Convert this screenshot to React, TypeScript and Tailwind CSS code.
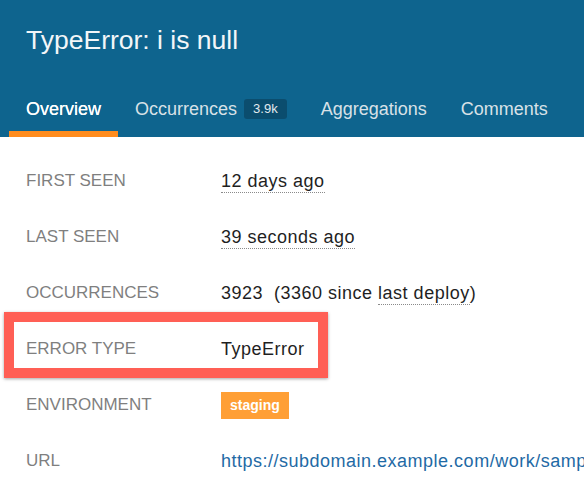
import React from 'react';

const TABS = [
  { label: 'Overview', active: true },
  { label: 'Occurrences', badge: '3.9k' },
  { label: 'Aggregations' },
  { label: 'Comments' },
];

function Dotted({ children }: { children: React.ReactNode }) {
  return <span className="border-b border-dotted border-[#8a8a8a] pb-[1px]">{children}</span>;
}

function Row({ label, children, highlight }: { label: string; children: React.ReactNode; highlight?: boolean }) {
  return (
    <div className="relative grid grid-cols-[195px_1fr] items-center h-[56px] pl-[26px] whitespace-nowrap">
      {highlight && (
        <div className="absolute left-[4px] w-[324px] top-[-9px] h-[66px] border-[10px] border-[#ff5f55] shadow-[0_1px_3px_rgba(0,0,0,0.35)] pointer-events-none"></div>
      )}
      <div className="text-[17px] leading-[24px] text-[#7f7f7f] uppercase">{label}</div>
      <div className="text-[18px] leading-[24px] tracking-[0.5px] text-[#1f1f1f]">{children}</div>
    </div>
  );
}

export default function App() {
  return (
    <div className="w-[584px] h-[486px] overflow-hidden bg-white font-['Liberation_Sans',Arial,sans-serif]">
      {/* header */}
      <header className="bg-[#0e648e] pt-[25px]">
        <h1 className="pl-[26px] text-[26.5px] leading-[30px] font-normal text-[#f3f6f8]">TypeError: i is null</h1>
        <nav className="flex items-end pl-[9px] mt-[42px]">
          {TABS.map(tab => (
            <div
              key={tab.label}
              className={
                'flex items-center gap-[7px] px-[17px] pb-[10px] border-b-[6px] text-[18px] leading-[24px] whitespace-nowrap ' +
                (tab.active ? 'border-[#ff8c1e] text-white' : 'border-transparent text-[#d8e1e7]')
              }
            >
              <span className={tab.active ? 'font-medium [text-shadow:0_0_0.4px_white]' : ''}>{tab.label}</span>
              {tab.badge && (
                <span className="h-[20px] px-[9px] rounded-[3px] bg-[#0b4d6e] text-[13px] leading-[20px] text-[#e2eaef] tracking-normal">
                  {tab.badge}
                </span>
              )}
            </div>
          ))}
        </nav>
      </header>

      {/* details */}
      <div className="pt-[16px]">
        <Row label="First seen">
          <Dotted>12 days ago</Dotted>
        </Row>
        <Row label="Last seen">
          <Dotted>39 seconds ago</Dotted>
        </Row>
        <Row label="Occurrences">
          <span className="whitespace-pre">3923  (3360 since </span>
          <Dotted>last deploy</Dotted>)
        </Row>
        <Row label="Error type" highlight>
          TypeError
        </Row>
        <Row label="Environment">
          <span className="inline-block h-[27px] px-[9px] bg-[#ff9f35] text-white text-[14px] font-bold leading-[27px] tracking-normal align-middle">
            staging
          </span>
        </Row>
        <Row label="URL">
          <span className="text-[#1f6aa5]">https://subdomain.example.com/work/sample/page</span>
        </Row>
      </div>
    </div>
  );
}
